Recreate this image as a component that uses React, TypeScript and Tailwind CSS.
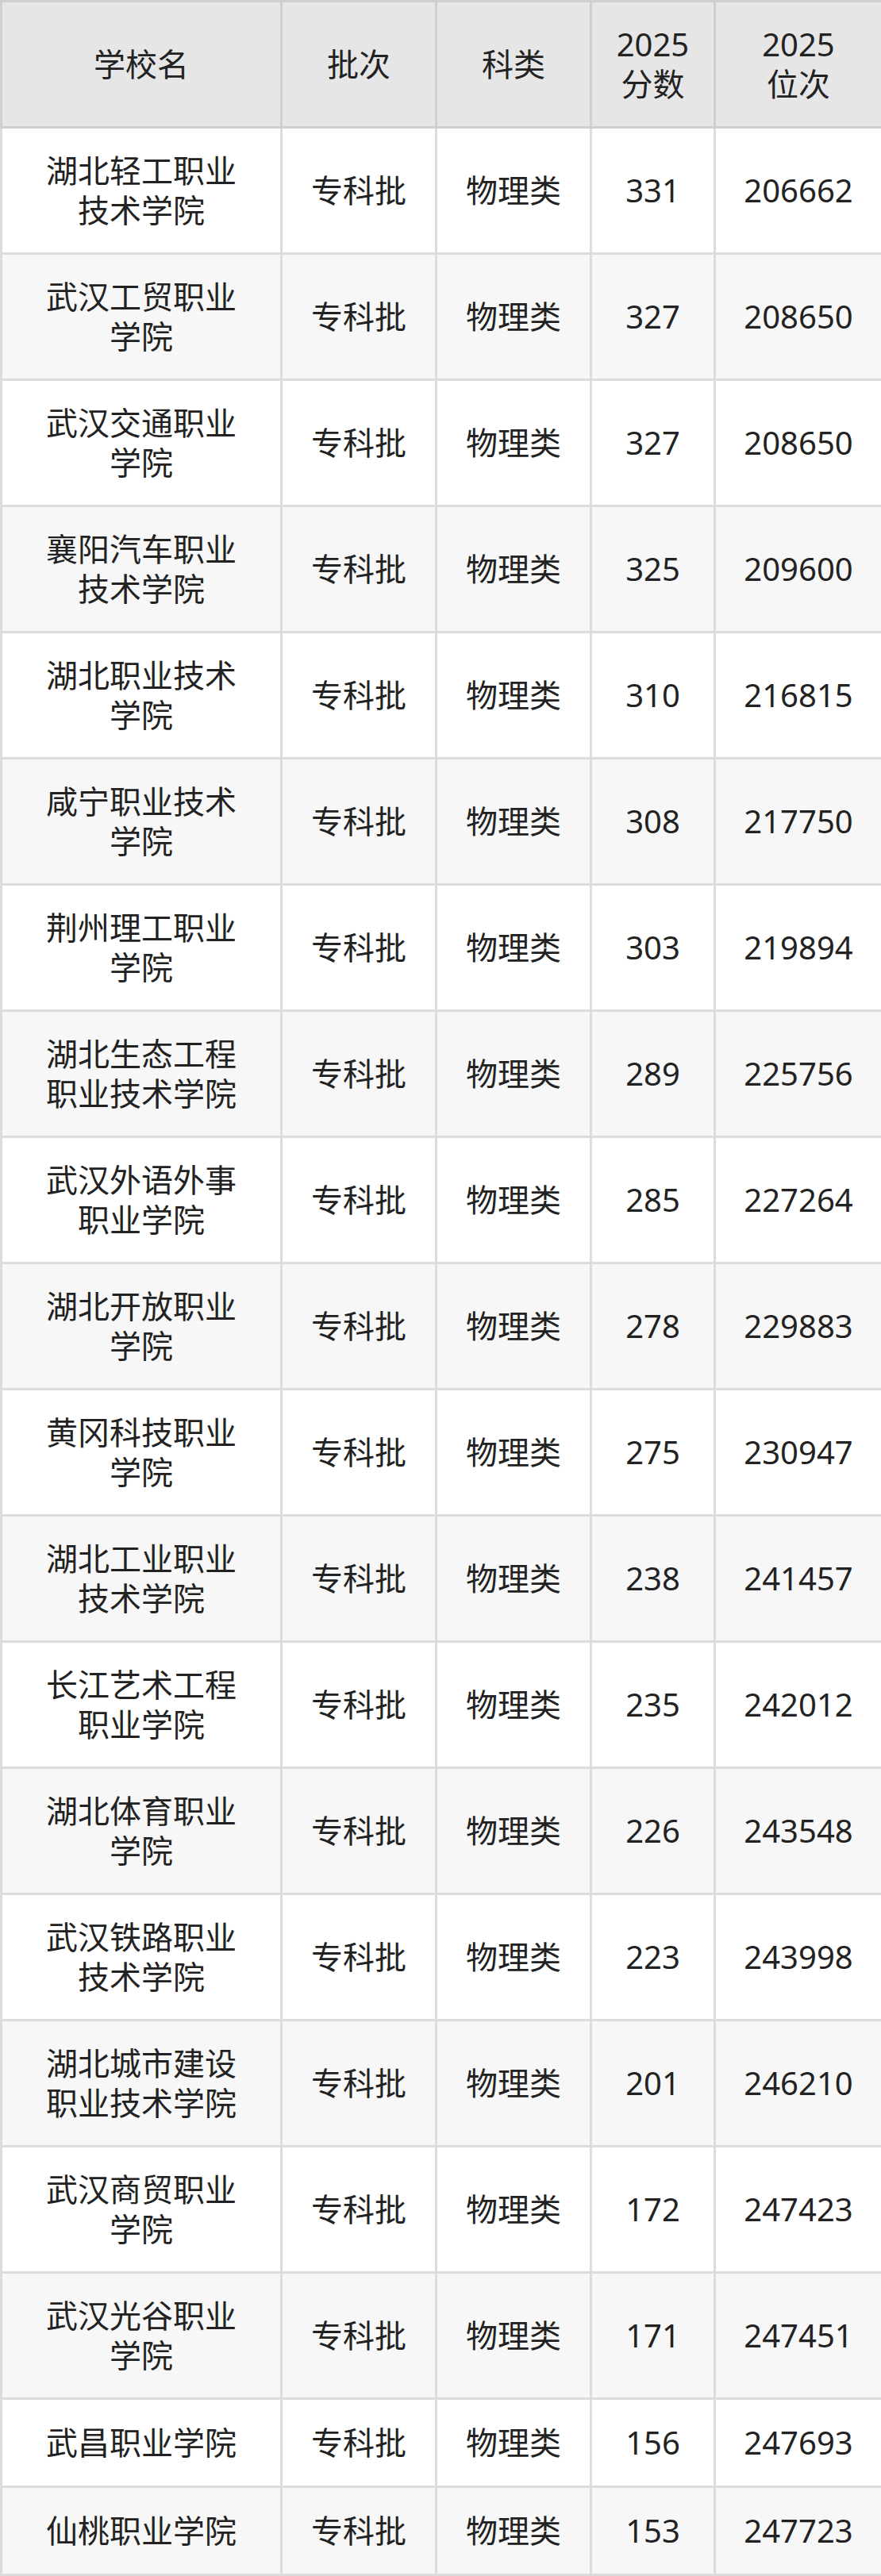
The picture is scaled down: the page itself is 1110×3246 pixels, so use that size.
import React from 'react'

const rows: [string, number, number][] = [
  ['湖北轻工职业技术学院', 331, 206662],
  ['武汉工贸职业学院', 327, 208650],
  ['武汉交通职业学院', 327, 208650],
  ['襄阳汽车职业技术学院', 325, 209600],
  ['湖北职业技术学院', 310, 216815],
  ['咸宁职业技术学院', 308, 217750],
  ['荆州理工职业学院', 303, 219894],
  ['湖北生态工程职业技术学院', 289, 225756],
  ['武汉外语外事职业学院', 285, 227264],
  ['湖北开放职业学院', 278, 229883],
  ['黄冈科技职业学院', 275, 230947],
  ['湖北工业职业技术学院', 238, 241457],
  ['长江艺术工程职业学院', 235, 242012],
  ['湖北体育职业学院', 226, 243548],
  ['武汉铁路职业技术学院', 223, 243998],
  ['湖北城市建设职业技术学院', 201, 246210],
  ['武汉商贸职业学院', 172, 247423],
  ['武汉光谷职业学院', 171, 247451],
  ['武昌职业学院', 156, 247693],
  ['仙桃职业学院', 153, 247723],
]

const th = 'border-[3px] border-[#cfcfcf] bg-[#e6e6e6] font-normal py-[28px] align-middle text-center'
const td = 'border-[3px] border-[#dcdcdc] py-[28px] px-[24px] h-[111px] align-middle text-center'

export default function App() {
  return (
    <div
      className="w-[1110px] bg-white text-[#222] text-[40px] leading-[50px]"
      style={{ fontFamily: '"Noto Sans", "Noto Sans CJK SC", sans-serif' }}
    >
      <table className="w-[1110px] table-fixed border-collapse">
        <colgroup>
          <col className="w-[353px]" />
          <col className="w-[195px]" />
          <col className="w-[195px]" />
          <col className="w-[156px]" />
          <col className="w-[211px]" />
        </colgroup>
        <thead>
          <tr>
            <th className={th + ' px-[40px]'}>学校名</th>
            <th className={th + ' px-[24px]'}>批次</th>
            <th className={th + ' px-[24px]'}>科类</th>
            <th className={th + ' px-[16px]'}>
              2025
              <br />
              分数
            </th>
            <th className={th + ' px-[16px]'}>
              2025
              <br />
              位次
            </th>
          </tr>
        </thead>
        <tbody>
          {rows.map(([name, score, rank], i) => (
            <tr key={name} className={i % 2 === 0 ? 'bg-white' : 'bg-[#f7f7f7]'}>
              <td className={td + ' !px-[40px]'}>{name}</td>
              <td className={td}>专科批</td>
              <td className={td}>物理类</td>
              <td className={td}>{score}</td>
              <td className={td}>{rank}</td>
            </tr>
          ))}
        </tbody>
      </table>
    </div>
  )
}
